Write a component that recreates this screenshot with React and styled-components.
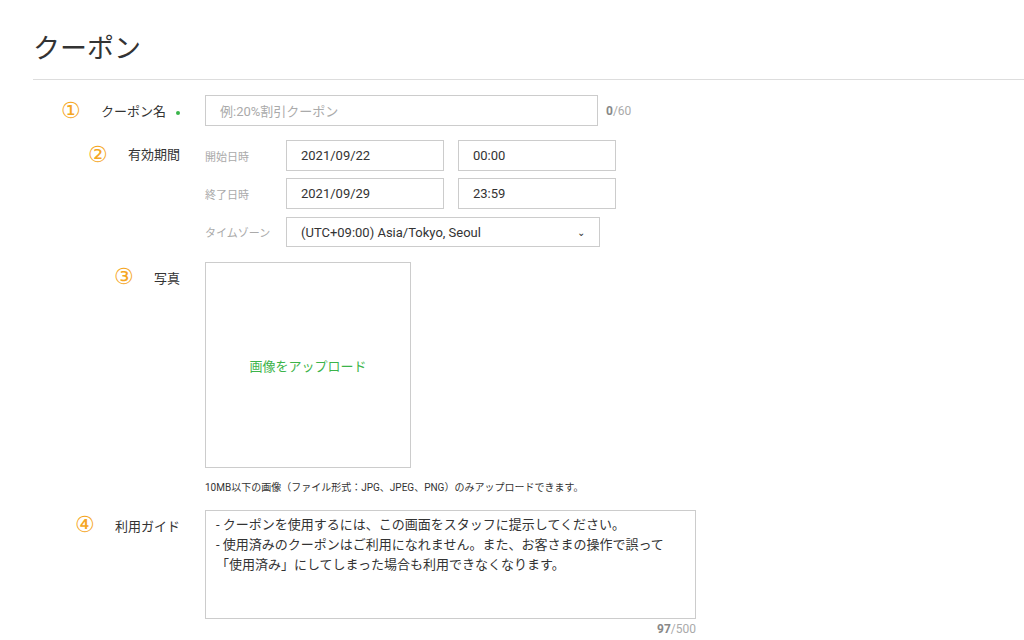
import React from 'react';
import styled, { createGlobalStyle } from 'styled-components';

const Global = createGlobalStyle`
  body {
    margin: 0;
    background: #fff;
    font-family: Roboto, "Noto Sans CJK JP", sans-serif;
    color: #333;
  }
`;

const Page = styled.div`
  padding: 28px 0 0 33px;
`;

const Title = styled.h1`
  margin: 0;
  font-size: 27px;
  font-weight: 400;
  color: #333;
  height: 40px;
  line-height: 42px;
  padding-bottom: 11px;
  border-bottom: 1px solid #ddd;
`;

const Form = styled.div`
  padding-top: 15px;
  display: flex;
  flex-direction: column;
`;

const Row = styled.div`
  display: grid;
  grid-template-columns: 147px 1fr;
  column-gap: 25px;
  margin-bottom: ${p => p.$mb || 0}px;
`;

const LabelCell = styled.div`
  display: flex;
  justify-content: flex-end;
  align-items: ${p => (p.$top ? 'flex-start' : 'center')};
  padding-top: ${p => (p.$top ? 4 : 0)}px;
  height: ${p => p.$h || 31}px;
  gap: 20px;
  font-size: 13px;
  color: #333;
`;

const Num = styled.span`
  color: #f5a623;
  font-size: 22px;
  line-height: 1;
  font-family: "DejaVu Sans", sans-serif;
  font-weight: 300;
`;

const Dot = styled.span`
  width: 4px;
  height: 4px;
  border-radius: 50%;
  background: #39b54a;
  margin-left: -10px;
  margin-top: 4px;
`;

const Line = styled.div`
  display: flex;
  align-items: center;
  gap: 8px;
`;

const Input = styled.div`
  box-sizing: border-box;
  width: ${p => p.$w}px;
  height: ${p => p.$h || 31}px;
  border: 1px solid #ccc;
  padding: 0 14px;
  display: flex;
  align-items: center;
  justify-content: space-between;
  font-size: 13px;
  color: ${p => (p.$ph ? '#aaa' : '#333')};
`;

const Counter = styled.span`
  font-size: 12px;
  color: #aaa;
  b { color: #888; font-weight: 700; }
`;

const Period = styled.div`
  display: grid;
  grid-template-columns: 66px 157px 157px;
  column-gap: 15px;
  row-gap: 7px;
  align-items: center;
`;

const SubLabel = styled.span`
  font-size: 11px;
  color: #aaa;
  white-space: nowrap;
`;

const Wide = styled.div`
  grid-column: 2 / 4;
  padding-top: 1px;
`;

const Upload = styled.div`
  width: 206px;
  height: 206px;
  box-sizing: border-box;
  border: 1px solid #ccc;
  display: flex;
  align-items: center;
  justify-content: center;
  color: #3cb44a;
  font-size: 13px;
`;

const Note = styled.div`
  font-size: 10px;
  color: #333;
  margin-top: 11px;
`;

const TextArea = styled.div`
  box-sizing: border-box;
  width: 491px;
  height: 109px;
  border: 1px solid #ccc;
  padding: 4px 10px;
  font-size: 13px;
  line-height: 20px;
  color: #333;
`;

const AreaCounter = styled.div`
  width: 491px;
  text-align: right;
  font-size: 12px;
  color: #aaa;
  margin-top: 3px;
  b { color: #888; }
`;

export default function App() {
  return (
    <Page>
      <Global />
      <Title>クーポン</Title>
      <Form>
        <Row $mb={14}>
          <LabelCell>
            <Num>①</Num>
            <span>クーポン名</span>
            <Dot />
          </LabelCell>
          <Line>
            <Input $w={393} $ph>例:20%割引クーポン</Input>
            <Counter><b>0</b>/60</Counter>
          </Line>
        </Row>
        <Row $mb={15}>
          <LabelCell $h={28} $top>
            <Num>②</Num>
            <span>有効期間</span>
          </LabelCell>
          <Period>
            <SubLabel>開始日時</SubLabel>
            <Input $w={158}>2021/09/22</Input>
            <Input $w={158}>00:00</Input>
            <SubLabel>終了日時</SubLabel>
            <Input $w={158}>2021/09/29</Input>
            <Input $w={158}>23:59</Input>
            <SubLabel>タイムゾーン</SubLabel>
            <Wide>
              <Input $w={314} $h={30}>
                <span>(UTC+09:00) Asia/Tokyo, Seoul</span>
                <span style={{ fontSize: 10 }}>⌄</span>
              </Input>
            </Wide>
          </Period>
        </Row>
        <Row $mb={16}>
          <LabelCell $h={30}>
            <Num>③</Num>
            <span>写真</span>
          </LabelCell>
          <div>
            <Upload>画像をアップロード</Upload>
            <Note>10MB以下の画像（ファイル形式：JPG、JPEG、PNG）のみアップロードできます。</Note>
          </div>
        </Row>
        <Row>
          <LabelCell $h={30}>
            <Num>④</Num>
            <span>利用ガイド</span>
          </LabelCell>
          <div>
            <TextArea>
              - クーポンを使用するには、この画面をスタッフに提示してください。<br />
              - 使用済みのクーポンはご利用になれません。また、お客さまの操作で誤って<br />
              「使用済み」にしてしまった場合も利用できなくなります。
            </TextArea>
            <AreaCounter><b>97</b>/500</AreaCounter>
          </div>
        </Row>
      </Form>
    </Page>
  );
}
